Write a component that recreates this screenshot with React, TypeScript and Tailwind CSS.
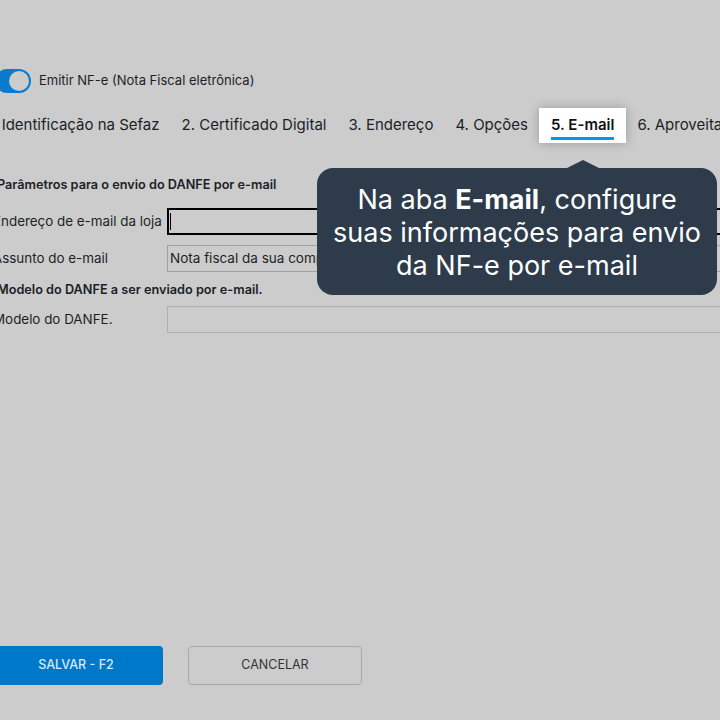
import React from 'react';

const TABS = [
    '1. Identificação na Sefaz',
    '2. Certificado Digital',
    '3. Endereço',
    '4. Opções',
    '5. E-mail',
    '6. Aproveitamento de crédito',
];

const ACTIVE = '5. E-mail';

export default function App() {
    return (
        <div
            className="relative w-[720px] h-[720px] overflow-hidden bg-[#cccccc] text-[#1b1f27]"
            style={{ fontFamily: 'Inter, "Noto Sans", sans-serif' }}
        >
            <div className="ml-[-5px] pt-[69px]">
                {/* toggle */}
                <div className="flex items-center gap-2 h-6">
                    <div className="w-[36px] h-6 rounded-full bg-[#0a7acf] flex items-center justify-end px-[2px]">
                        <div className="w-5 h-5 rounded-full bg-[#cccccc]" />
                    </div>
                    <span className="text-[13px]">Emitir NF-e (Nota Fiscal eletrônica)</span>
                </div>

                {/* tabs */}
                <div className="flex mt-[15px] ml-[-19px] whitespace-nowrap">
                    {TABS.map((t) => (
                        <div
                            key={t}
                            className={
                                t === ACTIVE
                                    ? 'h-[35px] px-3 bg-white shadow-[0_0_10px_rgba(0,0,0,0.25)] flex flex-col items-center justify-center font-semibold text-[15px] text-[#111]'
                                    : 'h-[35px] px-[11px] flex items-center text-[15px]'
                            }
                        >
                            <span className={t === ACTIVE ? 'border-b-[3px] border-[#0795ef] pb-[3px] mt-[4px] leading-[18px]' : ''}>{t}</span>
                        </div>
                    ))}
                </div>

                {/* form */}
                <div className="mt-[34px] ml-[2px] text-[13.4px]">
                    <div className="font-semibold text-[12.7px] leading-[16px]">Parâmetros para o envio do DANFE por e-mail</div>
                    <div className="flex items-center mt-[15px] h-[27px] ml-[-4px]">
                        <div className="w-[174px] shrink-0 whitespace-nowrap">Endereço de e-mail da loja</div>
                        <div className="w-[600px] shrink-0 h-[27px] border-2 border-black flex items-center pl-[1px]">
                            <div className="w-px h-[17px] bg-black" />
                        </div>
                    </div>
                    <div className="flex items-center mt-[10px] h-[27px] ml-[-4px]">
                        <div className="w-[174px] shrink-0 whitespace-nowrap">Assunto do e-mail</div>
                        <div className="w-[600px] shrink-0 h-[27px] border border-[#a0a0a0] flex items-center pl-[2px] whitespace-nowrap text-[13.5px]">
                            Nota fiscal da sua compra
                        </div>
                    </div>
                    <div className="font-semibold text-[12.7px] leading-[16px] mt-[10px]">Modelo do DANFE a ser enviado por e-mail.</div>
                    <div className="flex items-center mt-[8px] h-[27px] ml-[-4px]">
                        <div className="w-[174px] shrink-0 whitespace-nowrap">Modelo do DANFE.</div>
                        <div className="w-[600px] shrink-0 h-[27px] border border-[#b0b0b0]" />
                    </div>
                </div>

                {/* buttons */}
                <div className="flex gap-[25px] mt-[313px] ml-[-6px]">
                    <button className="w-[174px] h-[39px] rounded bg-[#0078c9] text-[#d9e8f5] text-[12.5px] font-medium">
                        SALVAR - F2
                    </button>
                    <button className="w-[174px] h-[39px] rounded border border-[#a8a8a8] text-[#333] text-[12.5px]">
                        CANCELAR
                    </button>
                </div>
            </div>

            {/* tooltip */}
            <div className="absolute left-[317px] top-[168px] w-[400px] rounded-[16px] bg-[#2d3b4b] text-white text-[27px] leading-[33px] text-center pt-[15px] pb-[13px]">
                <div className="absolute left-[248px] top-[-8px] w-0 h-0 border-l-[18px] border-r-[18px] border-b-[9px] border-l-transparent border-r-transparent border-b-[#2d3b4b]" />
                Na aba <b>E-mail</b>, configure<br />
                suas informações para envio<br />
                da NF-e por e-mail
            </div>
        </div>
    );
}
